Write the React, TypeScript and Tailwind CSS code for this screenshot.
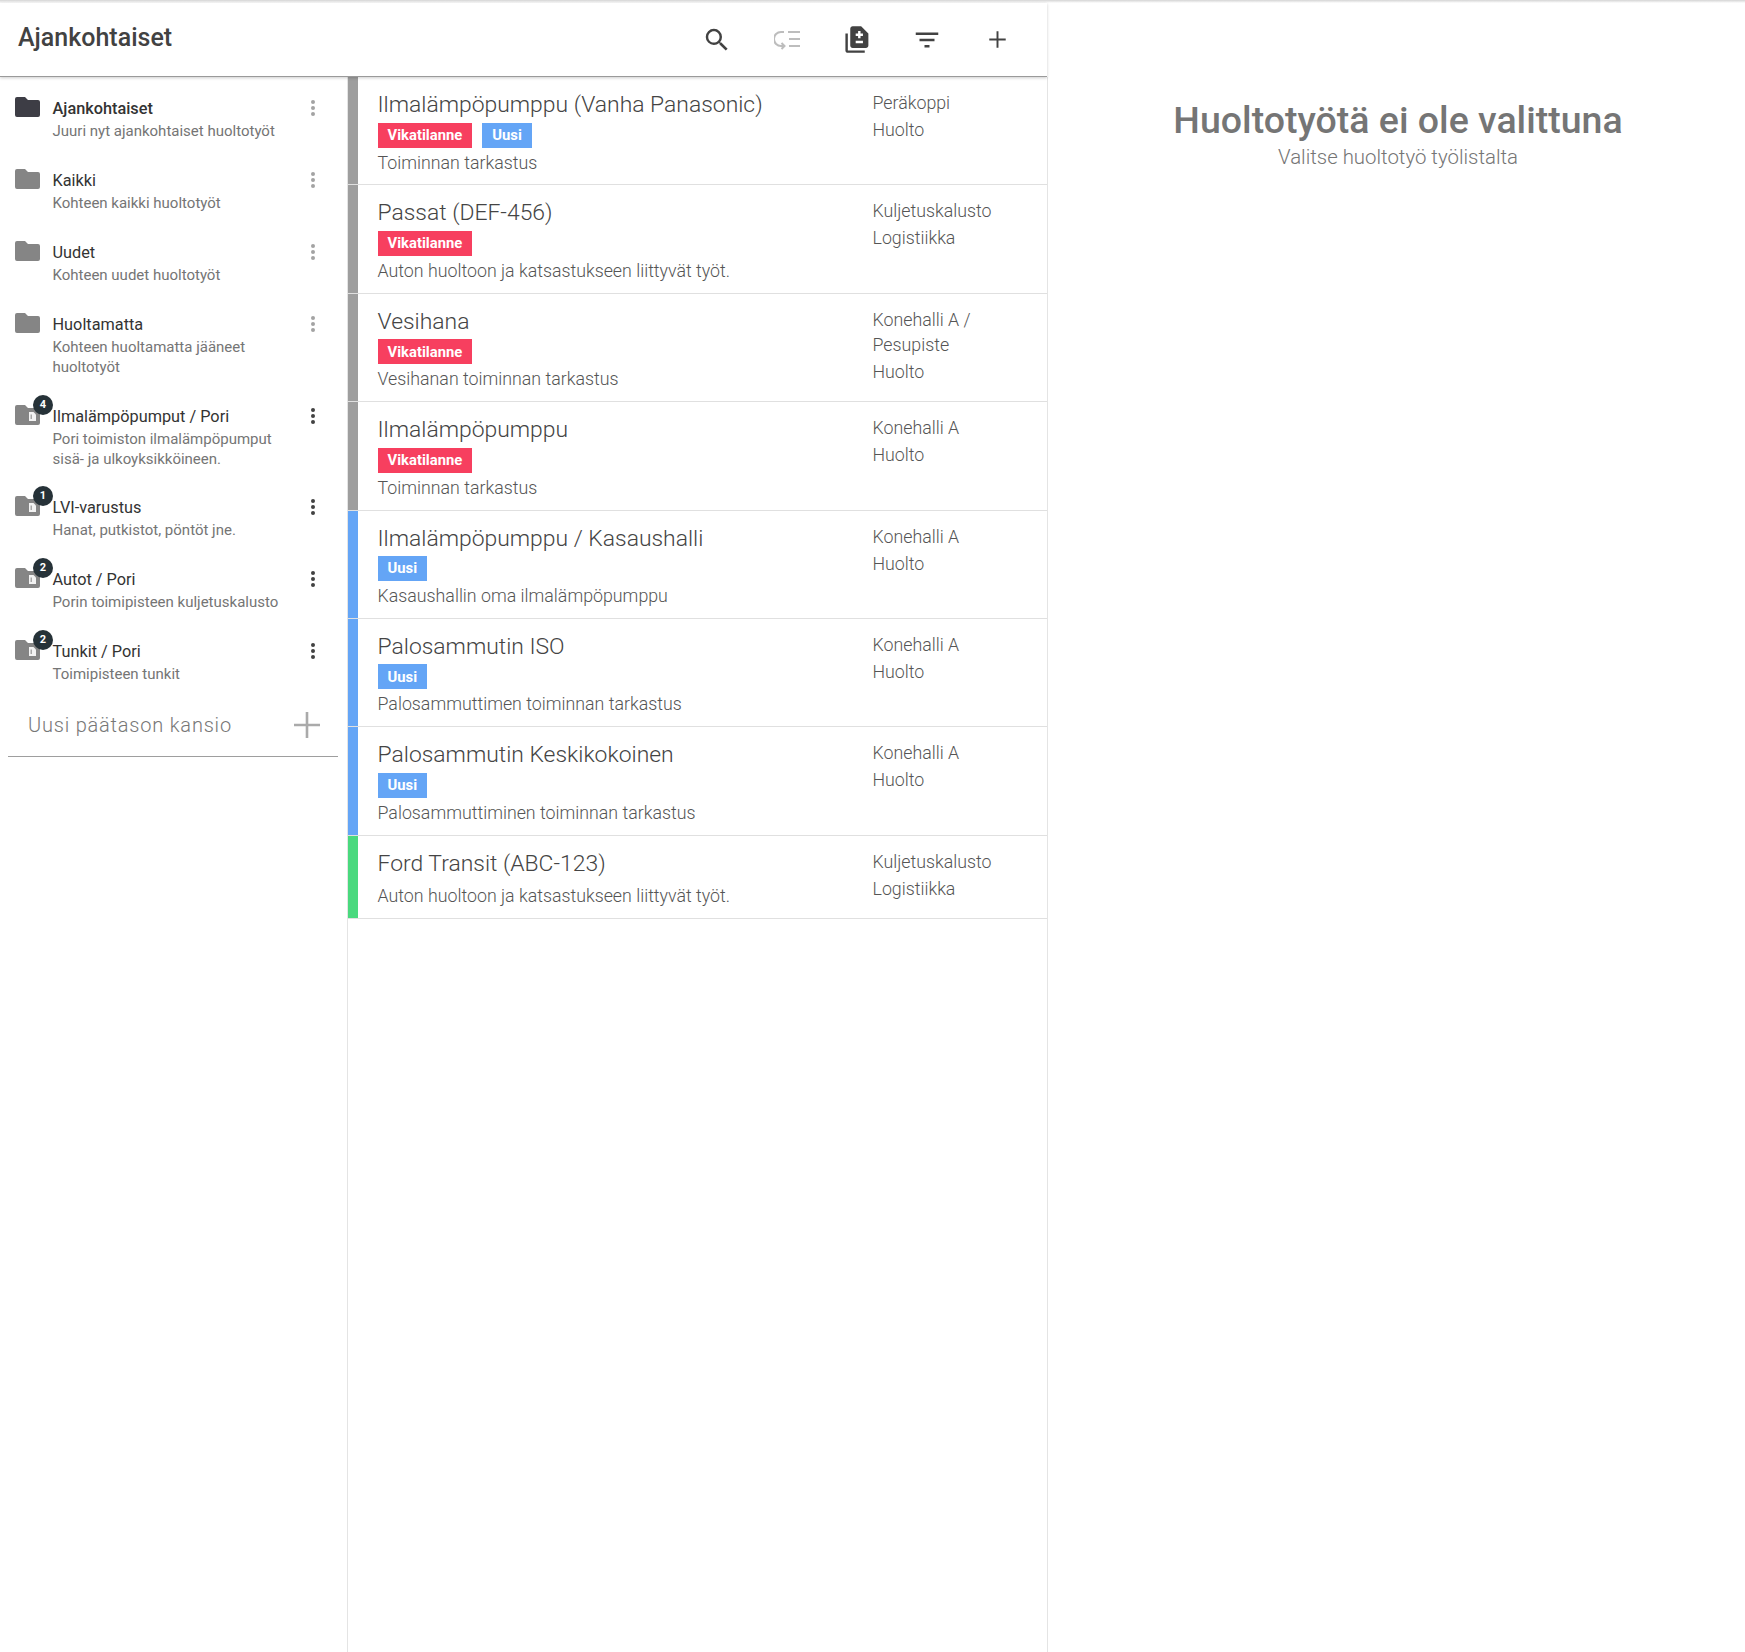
import type { ReactNode } from 'react';

type Job = {
  title: string;
  desc: string;
  place: string[];
  category: string;
  tags: ('Vikatilanne' | 'Uusi')[];
  color: 'gray' | 'blue' | 'green';
};

const FOLDERS = [
  { name: 'Ajankohtaiset', desc: 'Juuri nyt ajankohtaiset huoltotyöt', active: true },
  { name: 'Kaikki', desc: 'Kohteen kaikki huoltotyöt' },
  { name: 'Uudet', desc: 'Kohteen uudet huoltotyöt' },
  { name: 'Huoltamatta', desc: 'Kohteen huoltamatta jääneet huoltotyöt' },
  { name: 'Ilmalämpöpumput / Pori', desc: 'Pori toimiston ilmalämpöpumput sisä- ja ulkoyksikköineen.', count: 4 },
  { name: 'LVI-varustus', desc: 'Hanat, putkistot, pöntöt jne.', count: 1 },
  { name: 'Autot / Pori', desc: 'Porin toimipisteen kuljetuskalusto', count: 2 },
  { name: 'Tunkit / Pori', desc: 'Toimipisteen tunkit', count: 2 },
];

const JOBS: Job[] = [
  { title: 'Ilmalämpöpumppu (Vanha Panasonic)', desc: 'Toiminnan tarkastus', place: ['Peräkoppi'], category: 'Huolto', tags: ['Vikatilanne', 'Uusi'], color: 'gray' },
  { title: 'Passat (DEF-456)', desc: 'Auton huoltoon ja katsastukseen liittyvät työt.', place: ['Kuljetuskalusto'], category: 'Logistiikka', tags: ['Vikatilanne'], color: 'gray' },
  { title: 'Vesihana', desc: 'Vesihanan toiminnan tarkastus', place: ['Konehalli A /', 'Pesupiste'], category: 'Huolto', tags: ['Vikatilanne'], color: 'gray' },
  { title: 'Ilmalämpöpumppu', desc: 'Toiminnan tarkastus', place: ['Konehalli A'], category: 'Huolto', tags: ['Vikatilanne'], color: 'gray' },
  { title: 'Ilmalämpöpumppu / Kasaushalli', desc: 'Kasaushallin oma ilmalämpöpumppu', place: ['Konehalli A'], category: 'Huolto', tags: ['Uusi'], color: 'blue' },
  { title: 'Palosammutin ISO', desc: 'Palosammuttimen toiminnan tarkastus', place: ['Konehalli A'], category: 'Huolto', tags: ['Uusi'], color: 'blue' },
  { title: 'Palosammutin Keskikokoinen', desc: 'Palosammuttiminen toiminnan tarkastus', place: ['Konehalli A'], category: 'Huolto', tags: ['Uusi'], color: 'blue' },
  { title: 'Ford Transit (ABC-123)', desc: 'Auton huoltoon ja katsastukseen liittyvät työt.', place: ['Kuljetuskalusto'], category: 'Logistiikka', tags: [], color: 'green' },
];

const BAR_CLASS = {
  gray: 'bg-[#9e9e9e]',
  blue: 'bg-[#64a5f6]',
  green: 'bg-[#4ad97e]',
};

function ToolIcon({ size, children }: { size: number; children: ReactNode }) {
  return (
    <span className="flex w-[70px] justify-center">
      <svg width={size} height={size} viewBox="0 0 24 24" fill="#424242">
        {children}
      </svg>
    </span>
  );
}

function FolderIcon({ dark, shared }: { dark?: boolean; shared?: boolean }) {
  return (
    <svg className="block h-[20px] w-[25px]" viewBox="0 0 25 20">
      <path
        d="M2 0h8l3 3h10a2 2 0 0 1 2 2v13a2 2 0 0 1-2 2H2a2 2 0 0 1-2-2V2a2 2 0 0 1 2-2z"
        fill={dark ? '#3d3d45' : '#858585'}
      />
      {shared && <path d="M14 7h4.5l2.5 2.5V16h-7z" fill="#f2f2f2" />}
      {shared && <path d="M15.5 9.5h1.5v4.5h-1.5z" fill="#a8a8a8" />}
    </svg>
  );
}

function MoreDots({ dark }: { dark: boolean }) {
  const dot = dark ? 'bg-[#424242]' : 'bg-[#a3a3a3]';
  return (
    <div className="flex flex-col gap-[2px]">
      <span className={`h-[4px] w-[4px] rounded-full ${dot}`} />
      <span className={`h-[4px] w-[4px] rounded-full ${dot}`} />
      <span className={`h-[4px] w-[4px] rounded-full ${dot}`} />
    </div>
  );
}

function Tag({ label }: { label: string }) {
  const color = label === 'Uusi' ? 'bg-[#64a5f6]' : 'bg-[#f73f5f]';
  return (
    <span className={`flex h-[25px] items-center px-[10px] text-[14.8px] font-bold text-white ${color}`}>
      {label}
    </span>
  );
}

export default function App() {
  return (
    <div className="flex h-[1652px] w-[1745px] flex-col overflow-hidden bg-white font-['Roboto',sans-serif] text-[#555]">
      <div className="h-[3px] bg-gradient-to-b from-[#d4d4d4] to-white" />
      <header className="relative z-10 flex h-[74px] w-[1047px] items-center justify-between border-b border-[#9a9a9a] pr-[15px] pl-[18px] shadow-[0_1px_3px_rgba(0,0,0,0.2)]">
        <h1 className="pb-[3px] text-[25px] font-medium text-[#424242]">Ajankohtaiset</h1>
        <div className="flex items-center">
          <ToolIcon size={30}>
            <path d="M15.5 14h-.79l-.28-.27A6.471 6.471 0 0 0 16 9.5 6.5 6.5 0 1 0 9.5 16c1.61 0 3.09-.59 4.23-1.57l.27.28v.79l5 4.99L20.49 19l-4.99-5zm-6 0C7.01 14 5 11.99 5 9.5S7.01 5 9.5 5 14 7.01 14 9.5 11.99 14 9.5 14z" />
          </ToolIcon>
          <span className="flex w-[70px] justify-center">
            <svg className="h-[20px] w-[26px]" viewBox="0 0 26 20" fill="none" stroke="#bdbdbd" strokeWidth="2">
              <path d="M10 2H7a6.5 6.5 0 0 0 0 14h3M7.5 13l3 3-3 3" />
              <path d="M14 2h12M15 9h11M15 16h11" />
            </svg>
          </span>
          <ToolIcon size={29}>
            <path d="M18 23H4c-1.1 0-2-.9-2-2V7h2v14h14v2zM15 1H8c-1.1 0-1.99.9-1.99 2L6 17c0 1.1.89 2 1.99 2H19c1.1 0 2-.9 2-2V7l-6-6zm1.5 14h-6v-2h6v2zm0-6h-2v2h-2V9h-2V7h2V5h2v2h2v2z" />
          </ToolIcon>
          <ToolIcon size={30}>
            <path d="M10 18h4v-2h-4v2zM3 6v2h18V6H3zm3 7h12v-2H6v2z" />
          </ToolIcon>
          <ToolIcon size={29}>
            <path d="M18.8 12.8h-6v6h-1.6v-6h-6v-1.6h6v-6h1.6v6h6z" />
          </ToolIcon>
        </div>
      </header>

      <div className="flex min-h-0 flex-1">
        <aside className="w-[348px] border-r border-[#e4e4e4] pt-[10px] pl-[8px]">
          <div className="w-[330px]">
            {FOLDERS.map(folder => (
              <div
                className={`relative flex pr-[18px] ${folder.count === 4 ? 'pb-[17px]' : 'pb-[18px]'}`}
                key={folder.name}
              >
                <div className="relative ml-[7px] w-[37.5px] shrink-0 pt-[10px]">
                  <FolderIcon dark={folder.active} shared={!!folder.count} />
                  {folder.count && (
                    <span className="absolute top-[0px] left-[18px] flex h-[20px] w-[20px] items-center justify-center rounded-full bg-[#263238] text-[11px] font-bold text-white">
                      {folder.count}
                    </span>
                  )}
                </div>
                <div className="min-w-0 flex-1 pt-[10px]">
                  <div className={`text-[16.3px] leading-[24px] text-[#333] ${folder.active ? 'font-medium' : ''}`}>
                    {folder.name}
                  </div>
                  <div className="w-[230px] text-[15px] leading-[20px] text-[#757575]">{folder.desc}</div>
                </div>
                <div className="absolute top-[13px] right-[23px]">
                  <MoreDots dark={!!folder.count} />
                </div>
              </div>
            ))}
            <div className="flex h-[55px] items-center justify-between border-b border-[#9e9e9e] pr-[18px] pl-[20px] text-[#777]">
              <span className="pb-[9px] text-[20px] font-light tracking-[0.8px]">Uusi päätason kansio</span>
              <svg className="mb-[8px] h-[26px] w-[26px]" viewBox="0 0 26 26" fill="#aaaaaa">
                <path d="M11.7 0h2.6v11.7H26v2.6H14.3V26h-2.6V14.3H0v-2.6h11.7z" />
              </svg>
            </div>
          </div>
        </aside>

        <main className="w-[700px] border-r border-[#e4e4e4]">
          {JOBS.map(job => (
            <div className="flex border-b border-[#e0e0e0]" key={job.title}>
              <div className={`w-[10px] shrink-0 ${BAR_CLASS[job.color]}`} />
              <div className={`flex min-w-0 flex-1 pt-[13px] pl-[19.5px] ${job.tags.length > 0 ? 'pb-[9.9px]' : 'pb-[10.5px]'}`}>
                <div className="w-[495px] shrink-0">
                  <div className="text-[22.9px] leading-[30px] font-light text-[#444]">{job.title}</div>
                  {job.tags.length > 0 && (
                    <div className="mt-[2.5px] flex gap-[10px]">
                      {job.tags.map(tag => (
                        <Tag key={tag} label={tag} />
                      ))}
                    </div>
                  )}
                  <div className={`text-[17.8px] leading-[24px] font-light text-[#555] ${job.tags.length > 0 ? 'mt-[3px]' : 'mt-[5px]'}`}>
                    {job.desc}
                  </div>
                </div>
                <div className="text-[17.8px] leading-[25px] font-light text-[#555]">
                  {job.place.map(line => (
                    <div key={line}>{line}</div>
                  ))}
                  <div className="mt-[2px]">{job.category}</div>
                </div>
              </div>
            </div>
          ))}
        </main>

        <section className="flex-1 pt-[20px] pl-[3px] text-center">
          <div className="text-[37.5px] leading-[46px] font-medium text-[#757575]">Huoltotyötä ei ole valittuna</div>
          <div className="pt-[2px] text-[20.4px] leading-[24px] font-light text-[#757575]">Valitse huoltotyö työlistalta</div>
        </section>
      </div>
    </div>
  );
}
